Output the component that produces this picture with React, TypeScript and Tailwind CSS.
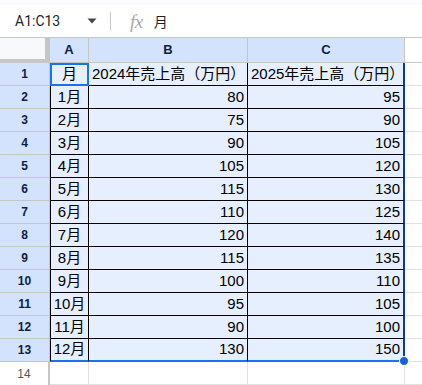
import React from 'react';

const FONT = { fontFamily: '"Liberation Sans", Arial, "Noto Sans CJK JP", sans-serif' };

const DATA: [string, string, string][] = [
  ['1月', '80', '95'],
  ['2月', '75', '90'],
  ['3月', '90', '105'],
  ['4月', '105', '120'],
  ['5月', '115', '130'],
  ['6月', '110', '125'],
  ['7月', '120', '140'],
  ['8月', '115', '135'],
  ['9月', '100', '110'],
  ['10月', '95', '105'],
  ['11月', '90', '100'],
  ['12月', '130', '150'],
];

function FormulaBar() {
  return (
    <div className="bg-white">
      <div className="h-[5px] bg-[#f9fbfd]" />
      <div className="h-[32px] flex items-center">
        <div className="w-[110px] flex items-center pl-[15px] pr-[10px]">
          <span className="text-[14px] text-[#1f1f1f] flex-1" style={{ fontFamily: 'Roboto, "Liberation Sans", sans-serif' }}>
            A1:C13
          </span>
          <svg width="10" height="6" viewBox="0 0 10 6" className="mr-[3px]">
            <path d="M0.5 0.5h9L5 5.5z" fill="#444746" />
          </svg>
        </div>
        <div className="w-px h-[18px] bg-[#c4c7c5]" />
        <span className="ml-[19px] text-[19px] italic text-[#a8a8a8] leading-none tracking-[-0.5px]" style={{ fontFamily: '"Liberation Serif", serif' }}>
          fx
        </span>
        <span className="ml-[11px] text-[14px] text-[#1f1f1f]" style={{ fontFamily: '"Noto Sans CJK JP", sans-serif' }}>
          月
        </span>
      </div>
    </div>
  );
}

function RowHead({ n, sel = true }: { n: number; sel?: boolean }) {
  return (
    <div
      className={
        sel
          ? 'w-[50px] shrink-0 flex items-center justify-center bg-[#d3e3fd] border-b border-r border-[#c4c7c5] text-[12px] font-bold text-[#0b1f45]'
          : 'w-[50px] shrink-0 flex items-center justify-center bg-white border-r-2 border-[#c4c7c5] text-[12px] text-[#555]'
      }
    >
      {n}
    </div>
  );
}

export default function App() {
  return (
    <div className="w-[422px] h-[385px] overflow-hidden bg-white" style={FONT}>
      <FormulaBar />

      {/* column headers */}
      <div className="flex h-[26px] border-t border-[#c4c7c5]">
        <div className="w-[50px] shrink-0 bg-[#f8f9fa] border-r-[5px] border-b-[4px] border-[#c6c6c6]" />
        {[
          ['A', 'w-[39px]'],
          ['B', 'w-[159px]'],
          ['C', 'w-[157px]'],
        ].map(([l, w]) => (
          <div
            key={l}
            className={`${w} shrink-0 flex items-center justify-center bg-[#d3e3fd] border-r border-b border-[#c4c7c5] text-[13px] font-semibold text-[#0b1f45]`}
          >
            {l}
          </div>
        ))}
        <div className="flex-1 border-b border-[#c4c7c5]" />
      </div>

      {/* row 1: headings */}
      <div className="flex h-[23px]">
        <RowHead n={1} />
        <div className="w-[39px] shrink-0 flex items-center justify-center bg-[#e6effd] shadow-[inset_0_0_0_2px_#1a73e8] text-[15px] text-black">
          月
        </div>
        <div className="w-[159px] shrink-0 flex items-center pl-[3px] bg-[#e6effd] border-r border-b border-black text-[15px] text-black whitespace-nowrap overflow-hidden">
          2024年売上高（万円）
        </div>
        <div className="w-[157px] shrink-0 flex items-center pl-[3px] bg-[#e6effd] border-r-2 border-b border-b-black border-r-[#0d3b8e] text-[15px] text-black whitespace-nowrap overflow-hidden">
          2025年売上高（万円）
        </div>
        <div className="flex-1 border-b border-[#e1e1e1]" />
      </div>

      {DATA.map(([m, a, b], i) => {
        const last = i === DATA.length - 1;
        const bottom = last ? 'border-b-2 border-b-[#1a73e8]' : 'border-b border-b-black';
        return (
          <div key={m} className="flex h-[23px]">
            <RowHead n={i + 2} />
            <div className={`w-[39px] shrink-0 flex items-center justify-center bg-[#e6effd] border-l border-r border-l-black border-r-black ${bottom} text-[15px] text-black`}>
              {m}
            </div>
            <div className={`w-[159px] shrink-0 flex items-center justify-end pr-[3px] bg-[#e6effd] border-r border-r-black ${bottom} text-[15px] text-black`}>
              {a}
            </div>
            <div className={`relative w-[157px] shrink-0 flex items-center justify-end pr-[3px] bg-[#e6effd] border-r-2 border-r-[#0d3b8e] ${bottom} text-[15px] text-black`}>
              {b}
              {last && (
                <span className="absolute right-[-6px] bottom-[-6px] w-[10px] h-[10px] rounded-full bg-[#1a5fd6] border border-white" />
              )}
            </div>
            <div className="flex-1 border-b border-[#e1e1e1]" />
          </div>
        );
      })}

      {/* row 14 */}
      <div className="flex h-[23px]">
        <RowHead n={14} sel={false} />
        <div className="w-[39px] shrink-0 border-r border-b border-[#e1e1e1]" />
        <div className="w-[159px] shrink-0 border-r border-b border-[#e1e1e1]" />
        <div className="w-[157px] shrink-0 border-r border-b border-[#e1e1e1]" />
        <div className="flex-1 border-b border-[#e1e1e1]" />
      </div>
    </div>
  );
}
